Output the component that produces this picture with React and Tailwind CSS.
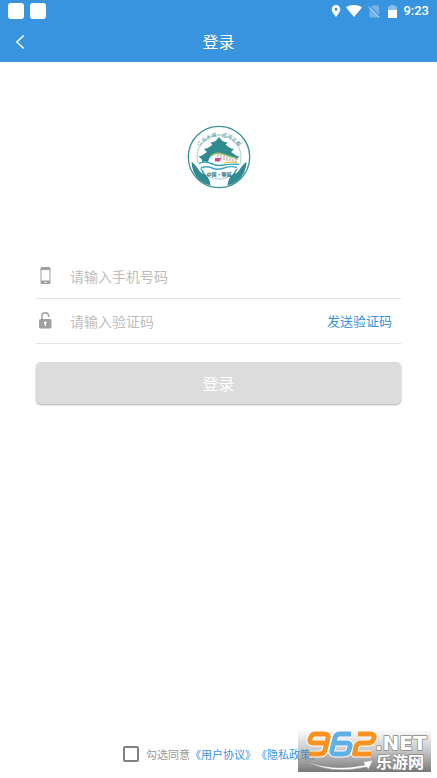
import React from "react";

function StatusBar() {
  return (
    <div className="flex h-[22px] items-center justify-between px-2 text-white">
      <div className="flex gap-1.5">
        <span className="size-4 rounded-[3px] bg-white" />
        <span className="size-4 rounded-[3px] bg-white" />
      </div>
      <div className="flex items-center">
        <svg className="h-3 w-[10px]" viewBox="0 0 10 12" fill="currentColor" aria-hidden="true">
          <path fillRule="evenodd" d="M5 0a4.3 4.3 0 0 0-4.3 4.3C.7 7.4 5 12 5 12s4.3-4.6 4.3-7.7A4.3 4.3 0 0 0 5 0Zm0 2.8a1.5 1.5 0 1 1 0 3 1.5 1.5 0 0 1 0-3Z" />
        </svg>
        <svg className="ml-[5px] h-3 w-4" viewBox="0 0 16 12" fill="currentColor" aria-hidden="true">
          <path d="M0 2.4C4.5-.8 11.5-.8 16 2.4L8 12Z" />
        </svg>
        <svg className="ml-[6px] h-[13px] w-3" viewBox="0 0 12 13" aria-hidden="true">
          <path d="M4.500.5H11v12H1.500V3.500Z" fill="#fff" opacity=".3" />
          <path d="M1.400.6 12 11.800" stroke="#3894de" strokeWidth="1.200" />
          <path d="M.5 1.300 11.300 12.600" stroke="#fff" strokeWidth="1.100" opacity=".4" />
        </svg>
        <svg className="ml-2 h-[13px] w-[9px]" viewBox="0 0 9 13" fill="#fff" aria-hidden="true">
          <path d="M2.500 0h4v1.200H9V5H0V1.200h2.500Z" opacity=".4" />
          <path d="M0 5h9v8H0Z" />
        </svg>
        <span className="ml-[6px] font-['Roboto','Liberation_Sans',sans-serif] text-[13px] leading-4 font-medium">9:23</span>
      </div>
    </div>
  );
}

function Emblem() {
  return (
    <svg className="size-16" viewBox="0 0 64 64" role="img" aria-label="江北水城·运河古都">
      <defs>
        <path id="emblem-arc" d="M8.500 35A23.500 23.500 0 1 1 55.500 35" />
      </defs>
      <circle cx="32" cy="32" r="30.700" fill="#fff" stroke="#3b9194" strokeWidth="1.300" />
      <circle cx="32" cy="32" r="22" fill="none" stroke="#8cc3c5" strokeWidth=".8" />
      <text fontSize="5" fill="#3b8f92" className="font-['Noto_Sans_CJK_SC',sans-serif]">
        <textPath href="#emblem-arc" startOffset="50%" textAnchor="middle">江北水城·运河古都</textPath>
      </text>
      <path fill="#2f8b8f" d="M32 12 34 14.500Q36 17 41 17.500L38.500 19.500 41 21.500Q43.500 23.500 47 24L44 27 47 29Q49 31 52.500 31.500L49 34.500V40H15V34.500L11.500 31.500Q15 31 17 29L20 27 17 24Q20.500 23.500 23 21.500L25.500 19.500 23 17.500Q28 17 30 14.500Z" />
      <path d="M22 34Q26 26 35 29Q44 32 52 34V39Q44 38 36 40H20Z" fill="#fff" />
      <path d="M24 31Q29 27 35 29T51 34" fill="none" stroke="#a5bd72" strokeWidth="1.600" />
      <path d="M31 30v2m3-2v4m3-3v4m3-3v4m3-3v3m3-2v3m3-3v3" stroke="#a98f86" strokeWidth=".9" />
      <path d="M28 33h6l-1 3.500h-5z" fill="#d8458f" />
      <path d="M11 38q6-3 12 0t12 1 18 0V47Q32 56 12 47Z" fill="#fff" />
      <path d="M37 38q8-2 14 0" stroke="#dfcf70" strokeWidth="1.300" fill="none" />
      <path d="M12 38.500q6-3 12 0t13 1.500 15-.5M14 43q6-2.500 11 0t12 0 13-.5" fill="none" stroke="#3ba8bb" strokeWidth="1.400" />
      <g fill="#2f8b8f">
        <path d="M4.500 37Q7 38 10 42.500Q12 46 15.500 49Q16 47 13 43.500Q15.500 43.500 17 48Q23 53 23.500 60.500Q17 59 11.500 54Q5 47.500 4.500 37Z" />
        <path d="M59.500 37Q57 38 54 42.500Q52 46 48.500 49Q48 47 51 43.500Q48.500 43.500 47 48Q41 53 40.500 60.500Q47 59 52.500 54Q59 47.500 59.500 37Z" />
      </g>
      <text x="32" y="51" textAnchor="middle" fontSize="5" fontWeight="700" fill="#27777e" className="font-['Noto_Sans_CJK_SC',sans-serif]">中国·聊城</text>
    </svg>
  );
}

function PhoneIcon() {
  return (
    <svg className="h-[18px] w-[13px]" viewBox="0 0 13 18" aria-hidden="true">
      <path fill="#a0a0a0" fillRule="evenodd" d="M3 0h7a1.500 1.500 0 0 1 1.500 1.500v14a1.500 1.500 0 0 1-1.500 1.500H3a1.500 1.500 0 0 1-1.500-1.500v-14A1.500 1.500 0 0 1 3 0ZM2.500 3v10.500h8V3ZM5.500 15v1h2v-1Z" />
    </svg>
  );
}

function LockIcon() {
  return (
    <svg className="h-[18px] w-[13px]" viewBox="0 0 13 18" aria-hidden="true">
      <path d="M3 8V4a3.300 3.300 0 0 1 6.600 0V5" fill="none" stroke="#a0a0a0" strokeWidth="1.500" />
      <rect y="7" width="12.500" height="9.500" rx="1.500" fill="#a0a0a0" />
      <path d="M6.300 9.500a1.300 1.300 0 0 0-.6 2.500v2h1.200v-2a1.300 1.300 0 0 0-.6-2.500Z" fill="#fff" />
    </svg>
  );
}

function Field({ id, label, icon, type, children }) {
  return (
    <div className="flex h-[45px] items-center border-b border-[#e2e2e2] pr-[9px]">
      <label htmlFor={id} aria-label={label} className="flex w-[34px] shrink-0 pl-[3px]">
        {icon}
      </label>
      <input id={id} type={type} placeholder={label} className="min-w-0 flex-1 bg-transparent text-sm outline-none placeholder:text-[#bdbdbd]" />
      {children}
    </div>
  );
}

const NINE = "M29 21H16Q12 21 13 17L14 15Q15 12 18 12H27Q32 12 31 16L28 28Q27 32 23 32H12";
const SIX = "M54 12H43Q39 12 38 16L35 28Q34 32 38 32H47Q51 32 52 28L53 25Q54 21 50 21H37";
const TWO = "M61 12H73Q78 12 77 16L76 18Q75 21 71 21H64Q60 21 59 25L57.500 32H74";

function Watermark() {
  return (
    <svg className="absolute right-[6px] bottom-[6px] h-[50px] w-[133px]" viewBox="0 0 133 50" role="img" aria-label="962.NET 乐游网">
      <defs>
        <linearGradient id="mark-shade" x1="0" y1="0" x2="0" y2="1">
          <stop offset="0" stopColor="#777" stopOpacity="0" />
          <stop offset=".5" stopColor="#777" stopOpacity=".4" />
          <stop offset="1" stopColor="#707070" stopOpacity=".95" />
        </linearGradient>
      </defs>
      <rect y="7" width="133" height="43" fill="url(#mark-shade)" />
      <g fill="none" strokeLinejoin="round" transform="translate(-1 0)">
        <g stroke="#fff" strokeWidth="7">
          <path d={NINE} />
          <path d={SIX} />
          <path d={TWO} />
        </g>
        <g strokeWidth="5">
          <path stroke="#f7931e" d={NINE} />
          <path stroke="#5fb0e4" d={SIX} />
          <path stroke="#f7931e" d={TWO} />
        </g>
      </g>
      <path d="M8 39Q34 50 67 43L65 40 75 38 70 48 69 45Q32 53 8 39Z" fill="#fff" stroke="#888" strokeWidth=".5" />
      <g fill="#fff" stroke="#888" strokeWidth="1.500" paintOrder="stroke" fontWeight="700">
        <text x="77" y="28" fontSize="20" className="font-['DejaVu_Sans',sans-serif]">.NET</text>
        <text x="78" y="46" fontSize="16" className="font-['Noto_Sans_CJK_SC',sans-serif]">乐游网</text>
      </g>
    </svg>
  );
}

export default function App() {
  return (
    <div className="relative flex min-h-screen flex-col bg-white font-['Noto_Sans_CJK_SC',sans-serif]">
      <header className="bg-[#3894de] text-white">
        <StatusBar />
        <div className="grid h-10 grid-cols-[40px_1fr_40px] items-start">
          <button type="button" aria-label="返回" className="flex h-10 items-center pl-[15px]">
            <svg className="h-4 w-[10px]" viewBox="0 0 10 16" fill="none" stroke="currentColor" strokeWidth="1.500" aria-hidden="true">
              <path d="M8.800 1.500 1.800 8l7 6.500" />
            </svg>
          </button>
          <h1 className="text-center text-base leading-[38px]">登录</h1>
        </div>
      </header>

      <main className="flex flex-1 flex-col px-9 pt-[63px]">
        <div className="flex justify-center">
          <Emblem />
        </div>
        <form className="mt-[65px]">
          <Field id="phone" type="tel" label="请输入手机号码" icon={<PhoneIcon />} />
          <Field id="code" type="text" label="请输入验证码" icon={<LockIcon />}>
            <button type="button" className="shrink-0 text-[13px] text-[#3894de]">发送验证码</button>
          </Field>
          <button type="button" className="mt-[18px] h-[42px] w-full rounded-[5px] bg-[#dcdcdc] text-base text-white shadow-[0_1px_2px_#aaaaaa]">登录</button>
        </form>
      </main>

      <footer className="flex h-12 items-center justify-center pl-2 text-[11px] text-[#999999]">
        <input id="agree" type="checkbox" className="mr-[7px] size-4 appearance-none rounded-[2px] border-2 border-[#808080] checked:bg-[#3894de]" />
        <label htmlFor="agree">勾选同意</label>
        <a href="#terms" className="text-[#3894de]">《用户协议》</a>
        <a href="#privacy" className="text-[#3894de]">《隐私政策》</a>
      </footer>
      <Watermark />
    </div>
  );
}
